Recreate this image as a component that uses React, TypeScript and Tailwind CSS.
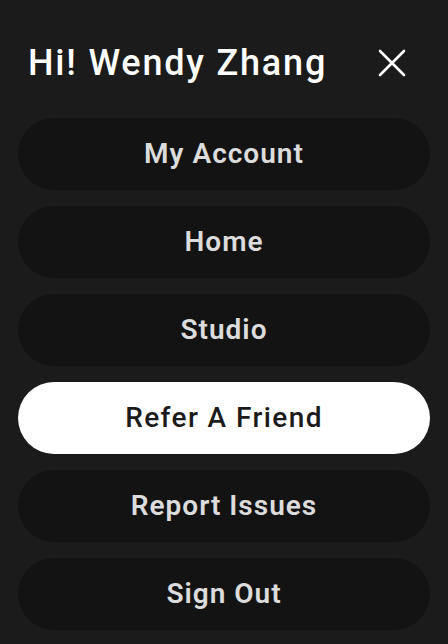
const items = ['My Account', 'Home', 'Studio', 'Refer A Friend', 'Report Issues', 'Sign Out'];
const active = 'Refer A Friend';

export default function App() {
    return (
        <div className="min-h-screen bg-[#1b1b1b] px-[18px] pt-[33px] font-['Roboto',sans-serif]">
            <div className="flex items-center justify-between h-[60px] pl-[10px] pr-[24px]">
                <h1 className="text-[36px] font-medium text-white leading-none tracking-[1.8px]">Hi! Wendy Zhang</h1>
                <button className="w-[28px] h-[28px] text-white">
                    <svg viewBox="0 0 28 28" width="28" height="28" fill="none" stroke="currentColor" strokeWidth="2.6" strokeLinecap="round">
                        <path d="M2 2 L26 26 M26 2 L2 26" />
                    </svg>
                </button>
            </div>
            <nav className="mt-[25px] flex flex-col gap-4">
                {items.map((item) => (
                    <button
                        key={item}
                        className={
                            item === active
                                ? 'h-[72px] rounded-full bg-white text-[#1b1b1b] text-[28px] font-medium tracking-[1.4px]'
                                : 'h-[72px] rounded-full bg-[#131313] text-[#dcdcdc] text-[28px] font-semibold tracking-[1px]'
                        }
                    >
                        {item}
                    </button>
                ))}
            </nav>
        </div>
    );
}
